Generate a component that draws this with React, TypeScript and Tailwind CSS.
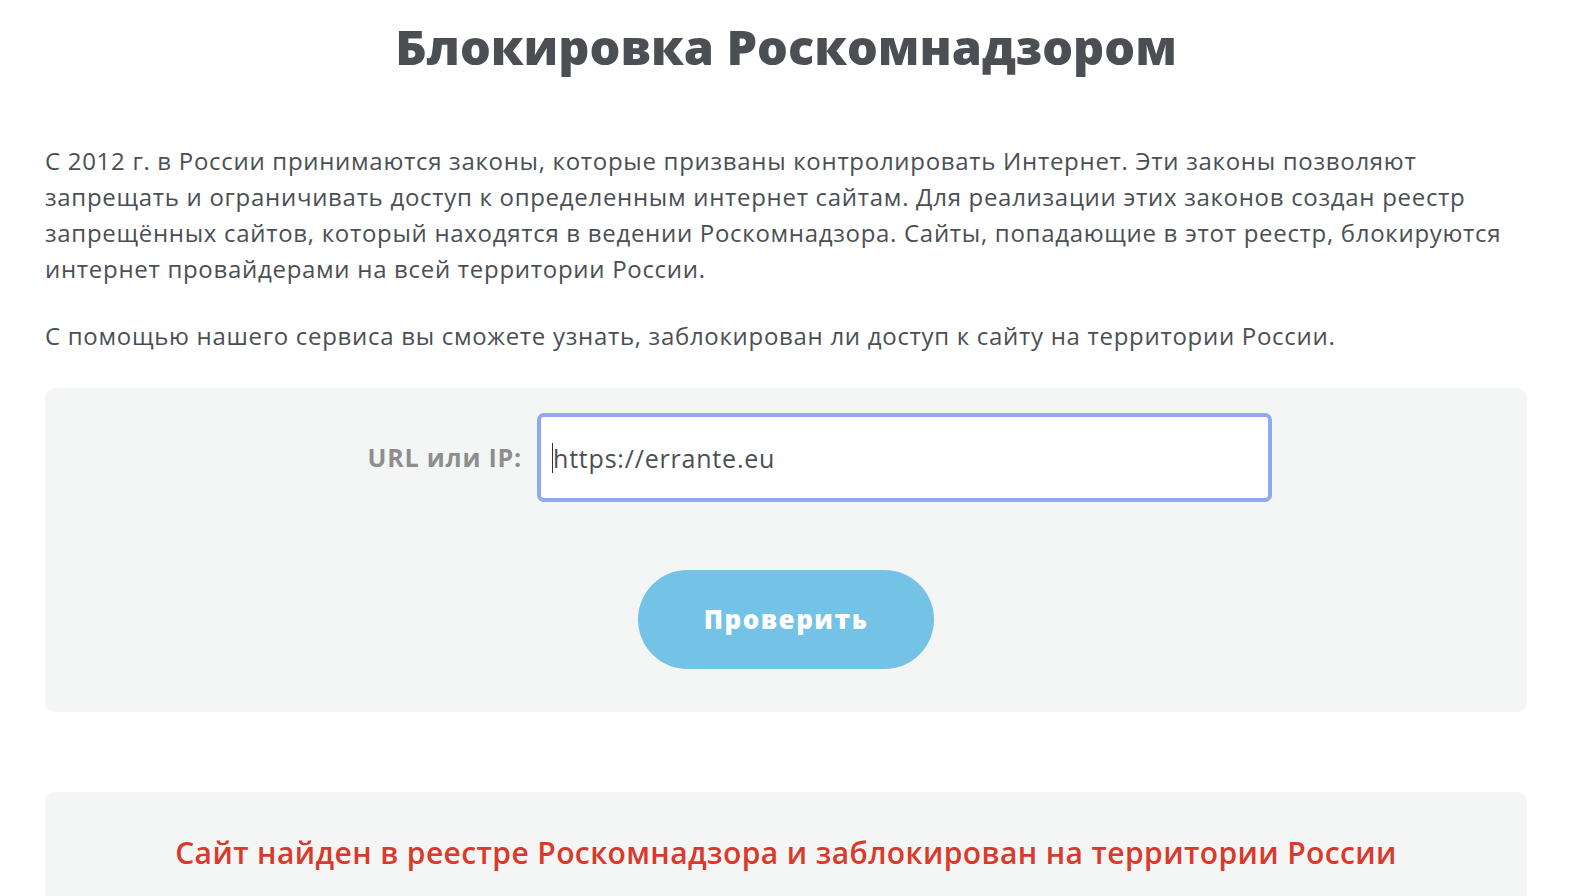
import React from "react";

export default function App() {
  return (
    <div className="min-h-[896px] bg-white" style={{ fontFamily: '"Open Sans", "Noto Sans", sans-serif' }}>
      <div className="pl-[45px] pr-[63px]">
        <h1 className="pt-[14px] text-center text-[48.5px] font-extrabold leading-[64px] text-[#4b4f54]">
          Блокировка Роскомнадзором
        </h1>
        <div className="mt-[65px] text-[24px] font-medium leading-[36px] tracking-[0.7px] text-[#4b4f54]">
          <p className="whitespace-nowrap">
            С 2012 г. в России принимаются законы, которые призваны контролировать Интернет. Эти законы позволяют
            <br />
            запрещать и ограничивать доступ к определенным интернет сайтам. Для реализации этих законов создан реестр
            <br />
            запрещённых сайтов, который находятся в ведении Роскомнадзора. Сайты, попадающие в этот реестр, блокируются
            <br />
            интернет провайдерами на всей территории России.
          </p>
          <p className="mt-[31px] whitespace-nowrap">
            С помощью нашего сервиса вы сможете узнать, заблокирован ли доступ к сайту на территории России.
          </p>
        </div>
        <div className="mt-[34px] flex h-[324px] flex-col rounded-[10px] bg-[#f4f5f5] pt-[25px]">
          <div className="flex items-center">
            <div className="w-[492px] pr-[15px] text-right">
              <label className="text-[25px] font-bold tracking-[0.8px] text-[#8e8e8e]">URL или IP:</label>
            </div>
            <div className="flex h-[89px] w-[735px] items-center rounded-[7px] border-[4px] border-[#8fa9ec] bg-white pl-[11px]">
              <span className="border-l border-[#333] text-[25px] leading-[30px] tracking-[0.8px] text-[#4b4f54]">https://errante.eu</span>
            </div>
          </div>
          <div className="mt-[68px] flex justify-center">
            <button className="h-[99px] w-[296px] rounded-full bg-[#74c2e6] text-[26px] font-extrabold tracking-[1.5px] text-white">
              Проверить
            </button>
          </div>
        </div>
        <div className="mt-[80px] h-[120px] rounded-t-[10px] bg-[#f4f5f5] pt-[40px] text-center">
          <p className="text-[30px] font-semibold leading-[42px] tracking-[0.4px] text-[#d93a2b]">
            Сайт найден в реестре Роскомнадзора и заблокирован на территории России
          </p>
        </div>
      </div>
    </div>
  );
}
